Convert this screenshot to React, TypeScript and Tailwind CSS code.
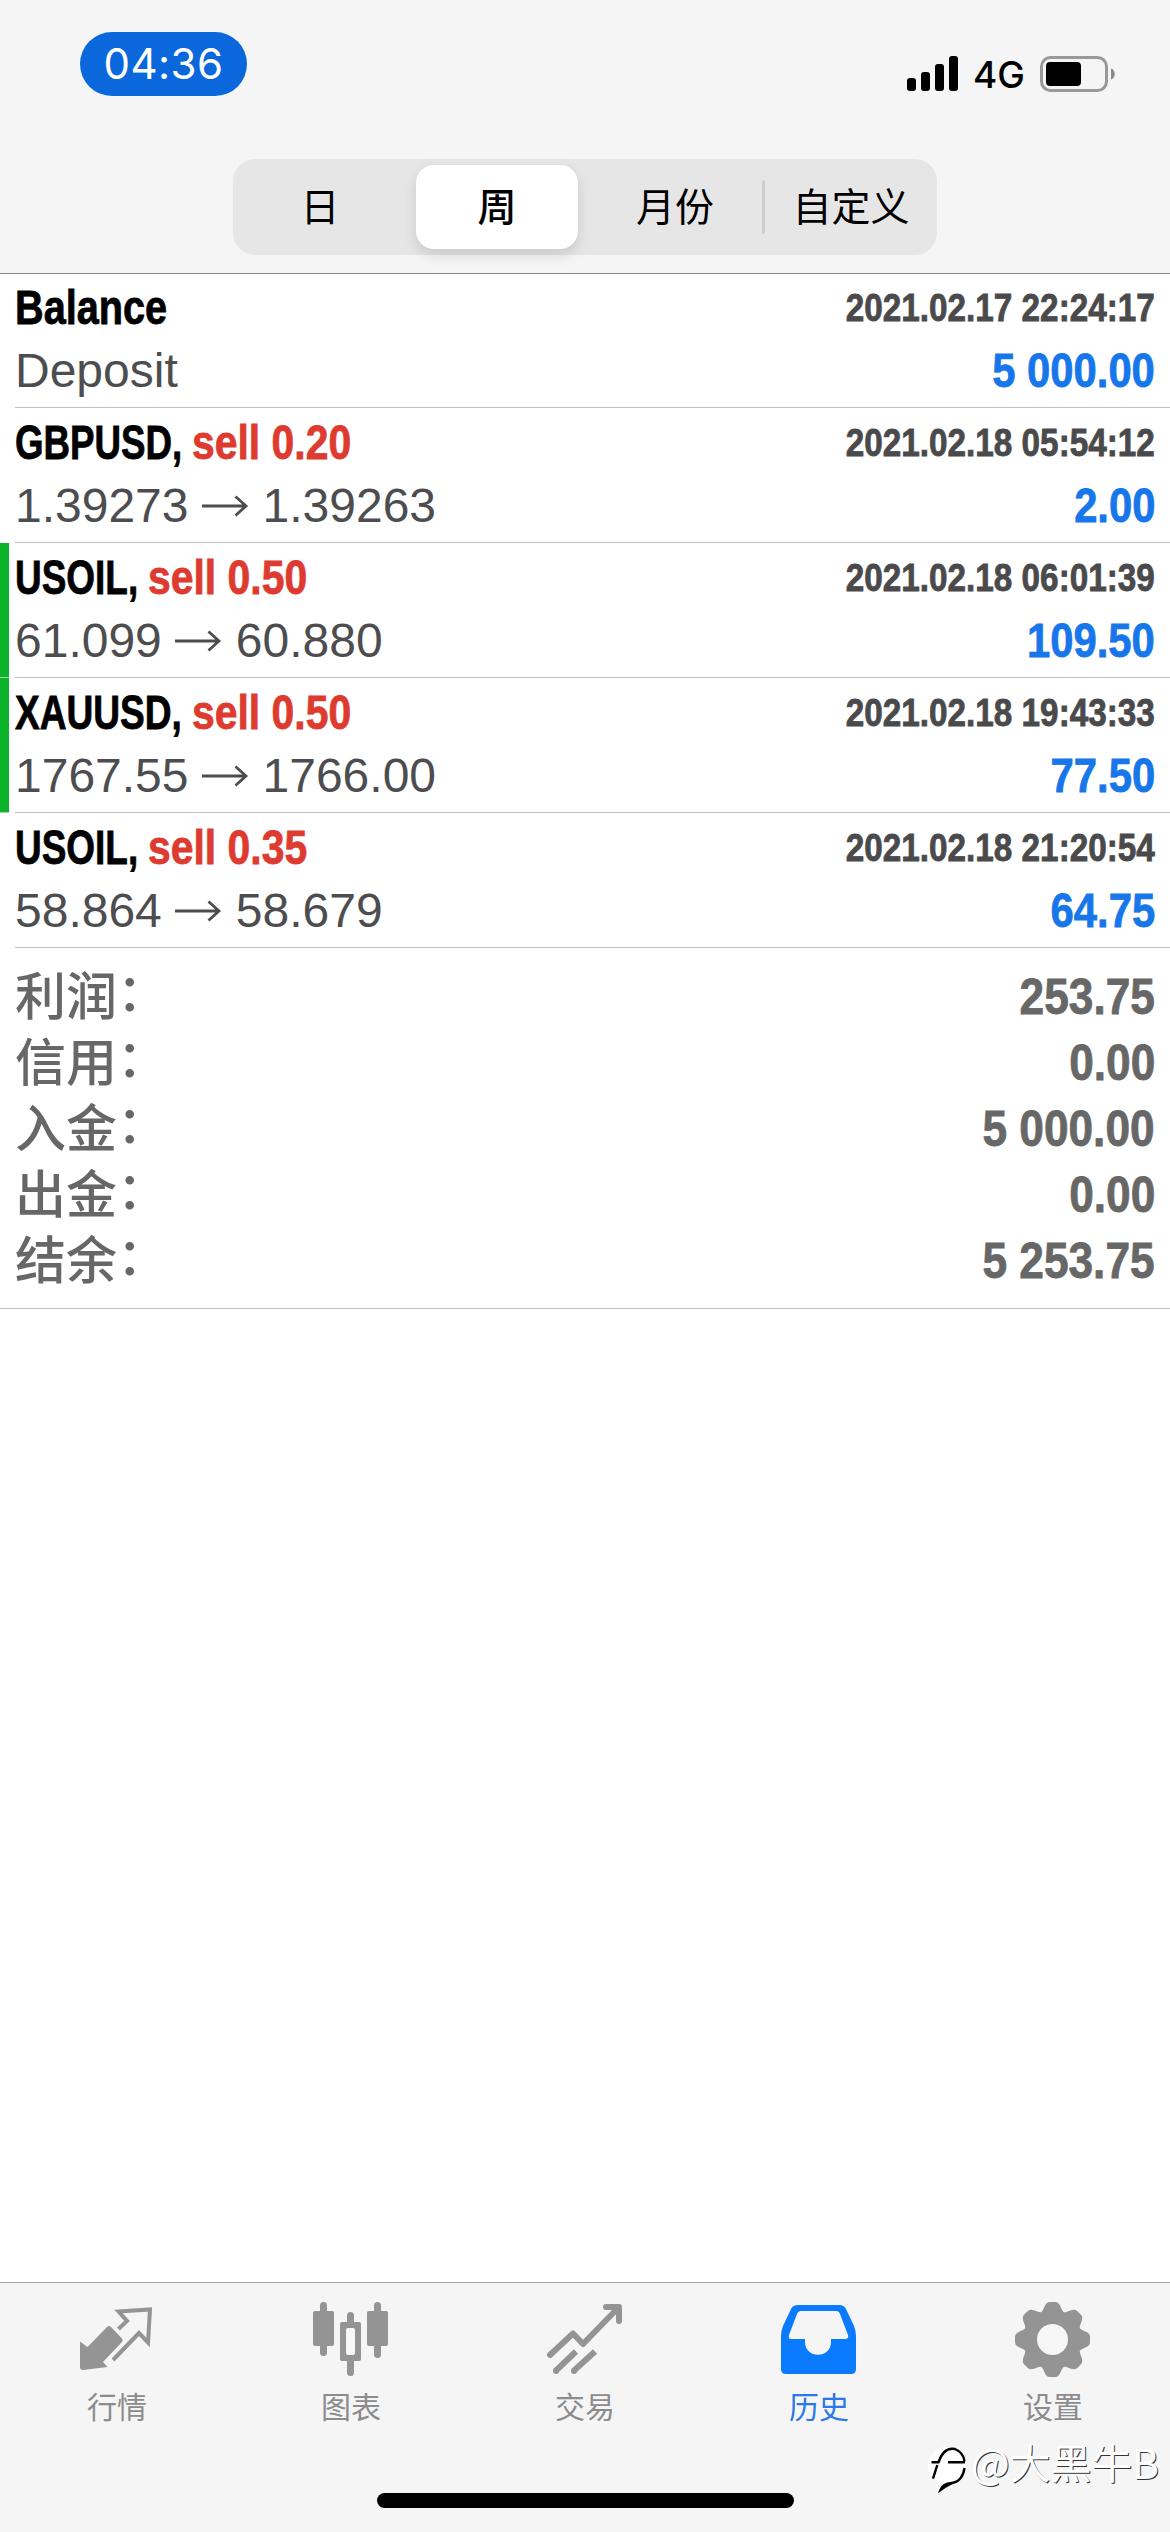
import type { ReactNode } from "react";

const SANS = "font-['Liberation_Sans','Noto_Sans_CJK_SC',sans-serif]";
const BOLD = "font-['Liberation_Sans','Noto_Sans_CJK_SC',sans-serif] font-bold whitespace-pre [-webkit-text-stroke:0.8px_currentColor]";
const CJK = "font-['Noto_Sans_CJK_SC',sans-serif]";

type Deal = {
  symbol: string;
  slot: string;
  condense: string;
  side?: string;
  from: string;
  to?: string;
  time: string;
  value: string;
  flagged?: boolean;
};

const deals: Deal[] = [
  { symbol: "Balance", slot: "w-[177px]", condense: "scale-x-[0.826]", from: "Deposit", time: "2021.02.17 22:24:17", value: "5 000.00" },
  { symbol: "GBPUSD,", slot: "w-[177px]", condense: "scale-x-[0.765]", side: "sell 0.20", from: "1.39273", to: "1.39263", time: "2021.02.18 05:54:12", value: "2.00" },
  { symbol: "USOIL,", slot: "w-[133px]", condense: "scale-x-[0.77]", side: "sell 0.50", from: "61.099", to: "60.880", time: "2021.02.18 06:01:39", value: "109.50", flagged: true },
  { symbol: "XAUUSD,", slot: "w-[177px]", condense: "scale-x-[0.772]", side: "sell 0.50", from: "1767.55", to: "1766.00", time: "2021.02.18 19:43:33", value: "77.50", flagged: true },
  { symbol: "USOIL,", slot: "w-[133px]", condense: "scale-x-[0.77]", side: "sell 0.35", from: "58.864", to: "58.679", time: "2021.02.18 21:20:54", value: "64.75" },
];

const totals = [
  ["利润", "253.75"],
  ["信用", "0.00"],
  ["入金", "5 000.00"],
  ["出金", "0.00"],
  ["结余", "5 253.75"],
];

function StatusBar() {
  return (
    <div className="flex h-[159px] items-start justify-between pl-20 pr-[53px] pt-8">
      <div className="flex h-16 w-[167px] items-center justify-center rounded-full bg-[#0a68dc] font-['Inter',sans-serif] text-[42px] leading-none tracking-[0.5px] text-white">
        04:36
      </div>
      <div className="flex items-center pt-[24px]">
        <svg className="h-9 w-[52px]" viewBox="0 0 52 36">
          <rect x="0" y="22" width="9" height="13" rx="3" />
          <rect x="14" y="16" width="9" height="19" rx="3" />
          <rect x="28" y="8" width="9" height="27" rx="3" />
          <rect x="42" y="0" width="9" height="35" rx="3" />
        </svg>
        <span className="relative top-px ml-[14px] w-[52px] font-['Inter',sans-serif] text-[37px] font-medium leading-9">4G</span>
        <svg className="ml-[14px] h-9 w-[78px]" viewBox="0 0 78 36">
          <rect x="2.5" y="1.5" width="65" height="33" rx="9" fill="none" stroke="#999" strokeWidth="3" />
          <rect x="7" y="6" width="35" height="24" rx="4" />
          <path d="M72 12.5c5 1.500 5 9.500 0 11z" fill="#8a8a8a" />
        </svg>
      </div>
    </div>
  );
}

function Segments() {
  return (
    <div className={`mx-auto flex h-24 w-[704px] rounded-[22px] bg-[#e6e6e7] text-[39px] leading-none ${CJK}`}>
      <div className="flex w-[174px] items-center justify-center pb-[5px]">日</div>
      <div className="my-1.5 ml-[9px] flex w-[162px] items-center justify-center rounded-[18px] bg-white pb-[5px] font-medium shadow-[0_6px_14px_rgba(0,0,0,0.13)]">周</div>
      <div className="flex w-[184px] items-center justify-center pb-[5px] pl-[10px]">月份</div>
      <div className="my-auto h-[54px] w-[3px] rounded bg-[#cfcfd1]" />
      <div className="flex flex-1 items-center justify-center pb-[5px]">自定义</div>
    </div>
  );
}

function Arrow() {
  return (
    <svg className="mx-[13px] h-12 w-12" viewBox="0 0 48 48" fill="none" stroke="#4d4d4f" strokeWidth="2.800">
      <path d="M0 24H44M33.500 14.500L44 24L33.500 33.500" />
    </svg>
  );
}

function DealRow({ deal, first }: { deal: Deal; first: boolean }) {
  return (
    <div className={`flex ${first ? "h-[134px]" : "h-[135px]"}`}>
      <div className={`w-[9px] shrink-0 ${deal.flagged ? "border-b border-[#9bdba6] bg-[#0bb32b]" : ""}`} />
      <div className="ml-1.5 flex flex-1 flex-col justify-end border-b border-[#bfbfc1] pb-[5px] pr-[15px]">
        <div className={`flex h-[63px] items-center justify-between text-[48px] leading-none ${BOLD}`}>
          <div className="flex text-black">
            <div className={deal.slot}>
              <span className={`inline-block origin-left ${deal.condense}`}>{deal.symbol}</span>
            </div>
            {deal.side && <span className="inline-block origin-left scale-x-[0.852] text-[#de3b30]">{deal.side}</span>}
          </div>
          <span className="inline-block origin-right scale-x-[0.876] text-[38px] text-[#4a4a4c]">{deal.time}</span>
        </div>
        <div className="flex h-[63px] items-center justify-between text-[48px] leading-none">
          <div className={`flex items-center text-[#4d4d4f] ${SANS}`}>
            <span>{deal.from}</span>
            {deal.to && (
              <>
                <Arrow />
                <span>{deal.to}</span>
              </>
            )}
          </div>
          <span className={`inline-block origin-right scale-x-[0.87] text-[#1676ea] ${BOLD}`}>{deal.value}</span>
        </div>
      </div>
    </div>
  );
}

function Totals() {
  return (
    <div className="h-[361px] border-b border-[#bfbfc1] pl-[15px] pr-[15px] pt-4 text-[#676767]">
      {totals.map(([label, value]) => (
        <div key={label} className="flex h-[66px] justify-between leading-[66px]">
          <div className={`flex pt-px text-[51px] font-medium ${SANS}`}>
            <span>{label}</span>
            <span className="relative -top-[4px]">：</span>
          </div>
          <span className={`inline-block origin-right scale-x-[0.885] text-[50px] ${BOLD}`}>{value}</span>
        </div>
      ))}
    </div>
  );
}

function Tab({ label, active, children }: { label: string; active?: boolean; children: ReactNode }) {
  return (
    <div className={`flex flex-1 flex-col items-center pt-[17px] ${active ? "text-[#0a7aff]" : "text-[#949494]"}`}>
      <svg className="h-20 w-20" viewBox="0 0 80 80" fill="none">{children}</svg>
      <span className={`mt-[7px] text-[30px] leading-9 ${active ? "text-[#2a78ea]" : "text-[#8c8c8c]"} ${CJK}`}>{label}</span>
    </div>
  );
}

const GEAR_ANGLES = [0, 45, 90, 135, 180, 225, 270, 315];

function TabBar() {
  return (
    <div className="relative h-[250px] border-t border-[#a8a8aa] bg-[#f5f5f5]">
      <div className="flex">
        <Tab label="行情">
          <path d="M3 41.500L10.500 47L30 27Q32 25 34 27L45 38.500Q46.500 40.500 44.500 42.500L26 62L30.500 67L6 70Q3 70 3 67Z" fill="currentColor" />
          <path d="M41.500 29L50 21L41.500 11.500L73 9.500L71 42.500L62 33L36 60" stroke="currentColor" strokeWidth="4" />
        </Tab>
        <Tab label="图表">
          <g fill="currentColor">
            <rect x="2" y="11" width="21" height="35" rx="2" />
            <rect x="9" y="2" width="7" height="54" rx="3.500" />
            <rect x="56" y="11" width="21" height="35" rx="2" />
            <rect x="63" y="2" width="7" height="56" rx="3.500" />
            <rect x="29" y="22" width="21" height="39" rx="2" />
            <rect x="36" y="12" width="7" height="64" rx="3.500" />
          </g>
          <rect x="35" y="28" width="9" height="27" rx="2" fill="#f8f8f8" />
        </Tab>
        <Tab label="交易">
          <g stroke="currentColor" strokeWidth="6" strokeLinecap="round" strokeLinejoin="round">
            <path d="M5 55L28 33.500L38 44L73 8" />
            <path d="M61 7H74V21" />
          </g>
          <g stroke="currentColor" strokeWidth="6">
            <path d="M10 71.500L31 51.500M28 71.500L50 51.500" />
          </g>
          <circle cx="11" cy="71" r="3" fill="currentColor" />
          <circle cx="29" cy="71" r="3" fill="currentColor" />
        </Tab>
        <Tab label="历史" active>
          <path fillRule="evenodd" clipRule="evenodd" fill="currentColor" d="M19 5H60Q65 5 67 9L75 26Q77 31 77 36V69Q77 74 72 74H7Q2 74 2 69V36Q2 31 4 26L12 9Q14 5 19 5ZM22 11Q19 11 18 14L10 35Q9 39 12 39H26V42C26 59 52 59 52 42V39H66Q70 39 69 35L61 14Q60 11 57 11Z" />
        </Tab>
        <Tab label="设置">
          <g fill="currentColor" transform="translate(39.500 39.500)">
            {GEAR_ANGLES.map((a) => (
              <path key={a} transform={`rotate(${a})`} d="M-15 -24Q-10 -27 -8 -33Q-6 -37.500 -3 -37.500H3Q6 -37.500 8 -33Q10 -27 15 -24L0 0Z" />
            ))}
            <circle r="28" />
          </g>
          <circle cx="39.500" cy="39.500" r="15.500" fill="#f6f6f6" />
        </Tab>
      </div>
      <div className="absolute bottom-[24px] left-[377px] h-[15px] w-[417px] rounded-full bg-black" />
      <div className="absolute bottom-[37px] left-[925px] flex items-center">
        <svg className="h-[52px] w-[42px] shrink-0" viewBox="0 0 42 52" fill="none">
          <circle cx="22" cy="25" r="19" fill="#fff" />
          <path d="M6.500 21.300H13.500C17 11 23 6.500 30 8Q38.500 11.500 39.500 20.500M23 21.300H40M12.300 24L8 37.700M39.500 27C38.500 35 34 41.500 26.500 42Q18 42.500 15.500 49Q25 42 30 41.300" stroke="#000" strokeWidth="2.400" />
        </svg>
        <span className={`ml-1 whitespace-nowrap pb-3 text-[41px] leading-[44px] tracking-[-0.2px] text-white [text-shadow:1px_1px_0_#333] ${CJK}`}>@大黑牛B</span>
      </div>
    </div>
  );
}

export default function App() {
  return (
    <div className={`flex h-[2532px] w-[1170px] flex-col overflow-hidden bg-white text-black ${SANS}`}>
      <header className="h-[274px] border-b border-[#88888a] bg-[#f5f5f5]">
        <StatusBar />
        <Segments />
      </header>
      <main className="flex-1">
        {deals.map((deal, i) => (
          <DealRow key={deal.time} deal={deal} first={i === 0} />
        ))}
        <Totals />
      </main>
      <TabBar />
    </div>
  );
}
